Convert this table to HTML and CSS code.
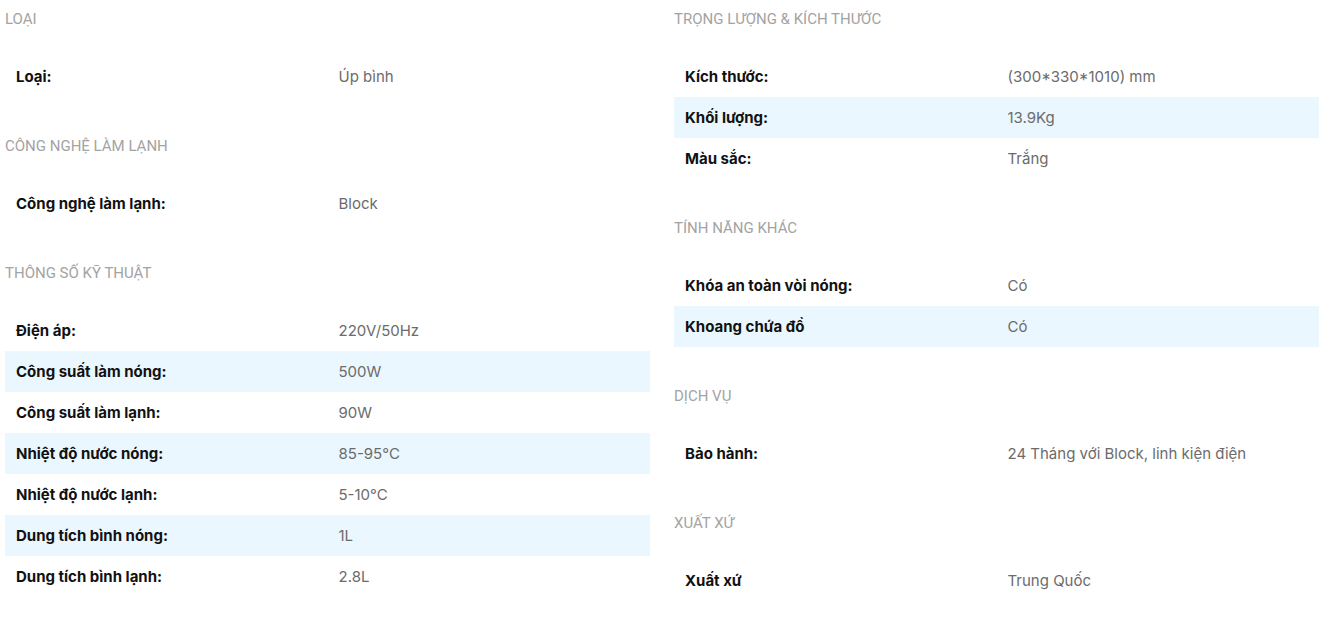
FILE: index.html
```html
<!DOCTYPE html>
<html lang="vi">
<head>
    <meta charset="UTF-8">
    <meta name="viewport" content="width=device-width, initial-scale=1.0">
    <title>Thông số kỹ thuật</title>
    <link rel="stylesheet" href="styles.css">
</head>
<body>
    <div class="specs">
        <!-- Left column -->
        <div class="spec-col">
            <div class="spec-group">
                <h3>Loại</h3>
                <table>
                    <tr><td>Loại:</td><td>Úp bình</td></tr>
                </table>
            </div>
            <div class="spec-group">
                <h3>Công nghệ làm lạnh</h3>
                <table>
                    <tr><td>Công nghệ làm lạnh:</td><td>Block</td></tr>
                </table>
            </div>
            <div class="spec-group">
                <h3>Thông số kỹ thuật</h3>
                <table>
                    <tr><td>Điện áp:</td><td>220V/50Hz</td></tr>
                    <tr><td>Công suất làm nóng:</td><td>500W</td></tr>
                    <tr><td>Công suất làm lạnh:</td><td>90W</td></tr>
                    <tr><td>Nhiệt độ nước nóng:</td><td>85-95°C</td></tr>
                    <tr><td>Nhiệt độ nước lạnh:</td><td>5-10°C</td></tr>
                    <tr><td>Dung tích bình nóng:</td><td>1L</td></tr>
                    <tr><td>Dung tích bình lạnh:</td><td>2.8L</td></tr>
                </table>
            </div>
        </div>

        <!-- Right column -->
        <div class="spec-col">
            <div class="spec-group">
                <h3>Trọng lượng &amp; Kích thước</h3>
                <table>
                    <tr><td>Kích thước:</td><td>(300*330*1010) mm</td></tr>
                    <tr><td>Khối lượng:</td><td>13.9Kg</td></tr>
                    <tr><td>Màu sắc:</td><td>Trắng</td></tr>
                </table>
            </div>
            <div class="spec-group">
                <h3>Tính năng khác</h3>
                <table>
                    <tr><td>Khóa an toàn vòi nóng:</td><td>Có</td></tr>
                    <tr><td>Khoang chứa đồ</td><td>Có</td></tr>
                </table>
            </div>
            <div class="spec-group">
                <h3>Dịch vụ</h3>
                <table>
                    <tr><td>Bảo hành:</td><td>24 Tháng với Block, linh kiện điện</td></tr>
                </table>
            </div>
            <div class="spec-group">
                <h3>Xuất xứ</h3>
                <table>
                    <tr><td>Xuất xứ</td><td>Trung Quốc</td></tr>
                </table>
            </div>
        </div>
    </div>
</body>
</html>
```

FILE: styles.css
```css
body {
    margin: 0;
    font-family: Inter, "Noto Sans", sans-serif;
    background: #fff;
}
.specs {
    display: grid;
    grid-template-columns: 1fr 1fr;
    gap: 24px;
    padding: 0 4px 0 5px;
}
.spec-group {
    margin-bottom: 30px;
}
.spec-group h3 {
    margin: 0;
    padding: 9px 0 27px;
    font-family: Roboto, sans-serif;
    font-size: 15px;
    font-weight: 400;
    line-height: 20px;
    color: #a3a3a3;
    text-transform: uppercase;
}
.spec-group table {
    width: 100%;
    border-collapse: collapse;
    table-layout: fixed;
}
.spec-group td {
    height: 41px;
    padding: 0 11px;
    font-size: 15px;
    line-height: 20px;
    vertical-align: middle;
}
.spec-group td:first-child {
    font-weight: 700;
    color: #111;
}
.spec-group td:last-child {
    color: #6b6b6b;
}
.spec-group tr:nth-child(even) {
    background-color: #eaf7fe;
}
```
